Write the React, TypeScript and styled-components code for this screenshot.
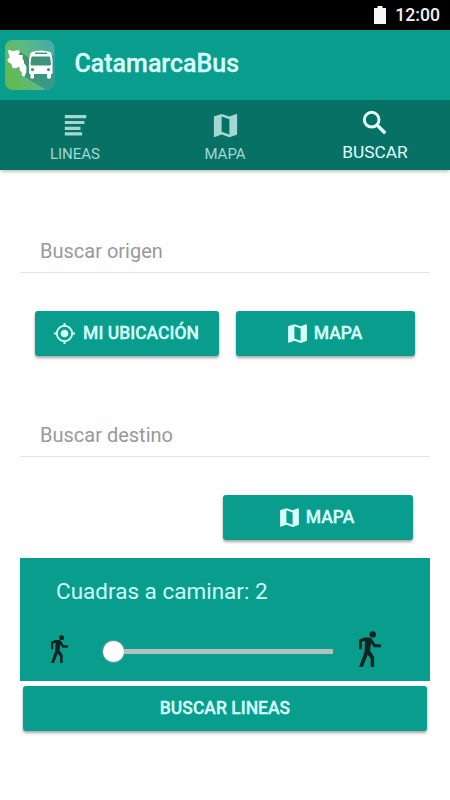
import React from "react";
import styled, { createGlobalStyle } from "styled-components";
import { MdMap, MdMyLocation } from "react-icons/md";

const GlobalStyle = createGlobalStyle`
  * { box-sizing: border-box; }
  body { margin: 0; background: #fff; font-family: Roboto, "Liberation Sans", sans-serif; }
  svg { display: block; flex: none; }
`;

const Screen = styled.div`
  width: 450px;
  height: 800px;
  display: flex;
  flex-direction: column;
  background: #fefefe;
  overflow: hidden;
`;

const StatusBar = styled.div`
  height: 30px;
  flex: none;
  display: flex;
  justify-content: flex-end;
  align-items: center;
  gap: 9px;
  padding: 0 10px 0 0;
  background: #000;
  color: #f2f2f2;
  font-size: 17.6px;
  font-weight: 500;
  line-height: 30px;
`;

const Header = styled.header`
  height: 70px;
  flex: none;
  display: flex;
  align-items: center;
  gap: 19.5px;
  padding: 0 5px;
  background: #089d8d;
`;

const Title = styled.h1`
  margin: -3px 0 0;
  color: #d9fffa;
  font-size: 25px;
  font-weight: 500;
  line-height: 32px;
  -webkit-text-stroke: 0.3px currentColor;
`;

const Tabs = styled.nav`
  height: 70px;
  flex: none;
  display: grid;
  grid-template-columns: repeat(3, 1fr);
  background: #087166;
  box-shadow: 0 3px 3px -1px rgba(0, 0, 0, 0.22);
`;

const Tab = styled.div<{ $active?: boolean }>`
  display: flex;
  flex-direction: column;
  align-items: center;
  padding-top: ${(p) => (p.$active ? 7 : 10)}px;
  gap: 3px;
  color: ${(p) => (p.$active ? "#e2fffb" : "#a2d8d1")};
  font-size: ${(p) => (p.$active ? 17.3 : 15)}px;
  line-height: 20px;
`;

const Content = styled.main`
  display: flex;
  flex-direction: column;
  padding: 58px 20px 0;
`;

const Field = styled.div`
  height: 45px;
  padding: 0 20px;
  border-bottom: 1px solid #e4e4e4;
  color: #999;
  font-size: 20px;
  line-height: 46px;
`;

const ButtonRow = styled.div<{ $end?: boolean }>`
  display: flex;
  justify-content: ${(p) => (p.$end ? "flex-end" : "space-between")};
  padding: 38px ${(p) => (p.$end ? 17.5 : 15)}px 0 15px;
`;

const Button = styled.button<{ $width: number }>`
  width: ${(p) => p.$width}px;
  height: 45px;
  display: flex;
  align-items: center;
  justify-content: center;
  gap: 7px;
  padding: 0 2px 1px 0;
  border: 0;
  border-radius: 3px;
  background: #089d8d;
  box-shadow: 0 2px 3px rgba(0, 0, 0, 0.35);
  color: #d9fffa;
  font-family: inherit;
  font-size: 17.5px;
  font-weight: 500;
  line-height: 44px;
  -webkit-text-stroke: 0.3px currentColor;
`;

const MapButton = styled(Button)`
  gap: 4px;
  padding-right: 4px;
`;

const SubmitButton = styled(Button)`
  margin: 5px 0 0 3px;
  padding: 0 0 1px;
`;

const DestinationField = styled(Field)`
  margin-top: 56px;
`;

const WalkPanel = styled.section`
  height: 123px;
  margin-top: 18px;
  padding-top: 17px;
  background: #089d8d;
`;

const WalkLabel = styled.div`
  padding-left: 36px;
  color: #d0fffa;
  font-size: 22.5px;
  line-height: 32px;
`;

const WalkControls = styled.div`
  height: 50px;
  margin-top: 17px;
  padding: 0 49px 0 31px;
  display: flex;
  align-items: center;
  justify-content: space-between;
`;

const Slider = styled.div`
  width: 230px;
  height: 21px;
  display: flex;
  align-items: center;
  margin: 4px 0 0 9px;
`;

const Thumb = styled.div`
  width: 21px;
  height: 21px;
  flex: none;
  border-radius: 50%;
  background: #fff;
  box-shadow: 0 0 1px 1px rgba(150, 158, 154, 0.6);
`;

const Track = styled.div`
  flex: 1;
  height: 5px;
  background: #b3c1be;
`;

const BatteryIcon = () => (
  <svg width="12" height="18" viewBox="0 0 12 18">
    <path d="M3.5 0h5v2H12v16H0V2h3.5z" fill="#f6f6f6" />
  </svg>
);

const LinesIcon = () => (
  <svg width="31" height="31" viewBox="0 0 31 31" fill="currentColor">
    <path d="M4.8 5h21.4v3.2H4.8zM4.8 10.9h19.6v3.1H4.8zM4.8 16.7h15.7v3.2H4.8zM4.8 22.3h17.3v3.1H4.8z" />
  </svg>
);

const SearchIcon = () => (
  <svg width="32" height="32" viewBox="0 0 24 24" fill="none" stroke="currentColor">
    <circle cx="9.5" cy="9.5" r="5.5" strokeWidth="2.2" />
    <path d="M13.7 13.7l6 6" strokeWidth="2.5" />
  </svg>
);

const Logo = () => (
  <svg width="50" height="50" viewBox="0 0 50 50">
    <defs>
      <linearGradient id="tile" x1="0" y1="0.6" x2="1" y2="0.2">
        <stop offset="0" stopColor="#62b94e" />
        <stop offset="0.45" stopColor="#5fba80" />
        <stop offset="1" stopColor="#47aaa8" />
      </linearGradient>
      <linearGradient id="shade" x1="0" y1="0" x2="1" y2="0.6">
        <stop offset="0" stopColor="#39835a" />
        <stop offset="1" stopColor="#2f8f88" />
      </linearGradient>
      <clipPath id="tileClip">
        <rect width="49.5" height="50" rx="7.5" />
      </clipPath>
    </defs>
    <g clipPath="url(#tileClip)">
      <rect width="50" height="50" fill="url(#tile)" />
      <path d="M13.5 11l11 7 3-6 18 1 4 4v33H41L20 37 11 25z" fill="url(#shade)" opacity="0.75" />
    </g>
    <path
      transform="scale(0.3333) translate(-16 -33)"
      d="M24 64l5-1 10 3 20-2 1 9-4 5h13v12l4 5v7l7 10v18l-6 13-7-3-1-10-5-5-3-12-9 5-10-1-4-12-10-7-2-6 7-7z"
      fill="#fff"
    />
    <path
      fillRule="evenodd"
      fill="#fff"
      d="M27 12q9-3 18 0 1.5.6 1.7 3l.8 4v15H46v4q-2 1.500-4 0v-4H29v4q-2 1.500-3.500 0v-4H24V19l1-4q.3-2.500 2-3zM30 12.500v1.500h12v-1.500zM27.500 16.500q-1 0-1.200 1l-.8 6.500q0 1.500 1.500 1.500h17.500q1.500 0 1.500-1.500l-.8-6.500q-.2-1-1.200-1zM27.500 28a1.600 1.600 0 100 3.200 1.600 1.600 0 000-3.200zM43.500 28a1.600 1.600 0 100 3.200 1.600 1.600 0 000-3.200z"
    />
  </svg>
);

const WalkIcon = ({ width, height }: { width: number; height: number }) => (
  <svg width={width} height={height} viewBox="0 0 64 106" fill="#12231f">
    <circle cx="40" cy="10" r="9.5" />
    <path d="M15 19L0 26v28h8V32l9-3-1 31L0 106h11l14-36 9 11v25h10V76L32 58l3-22 8 12h21v-9H48L38 24q-3-5-9-5z" />
  </svg>
);

export default function App() {
  return (
    <Screen>
      <GlobalStyle />
      <StatusBar>
        <BatteryIcon />
        12:00
      </StatusBar>
      <Header>
        <Logo />
        <Title>CatamarcaBus</Title>
      </Header>
      <Tabs>
        <Tab>
          <LinesIcon />
          LINEAS
        </Tab>
        <Tab>
          <MdMap size={31} />
          MAPA
        </Tab>
        <Tab $active>
          <SearchIcon />
          BUSCAR
        </Tab>
      </Tabs>
      <Content>
        <Field>Buscar origen</Field>
        <ButtonRow>
          <Button $width={184}>
            <MdMyLocation size={23} />
            MI UBICACIÓN
          </Button>
          <MapButton $width={179}>
            <MdMap size={25} />
            MAPA
          </MapButton>
        </ButtonRow>
        <DestinationField>Buscar destino</DestinationField>
        <ButtonRow $end>
          <MapButton $width={190}>
            <MdMap size={25} />
            MAPA
          </MapButton>
        </ButtonRow>
        <WalkPanel>
          <WalkLabel>Cuadras a caminar: 2</WalkLabel>
          <WalkControls>
            <WalkIcon width={17} height={28} />
            <Slider>
              <Thumb />
              <Track />
            </Slider>
            <WalkIcon width={22} height={36} />
          </WalkControls>
        </WalkPanel>
        <SubmitButton $width={404}>BUSCAR LINEAS</SubmitButton>
      </Content>
    </Screen>
  );
}
